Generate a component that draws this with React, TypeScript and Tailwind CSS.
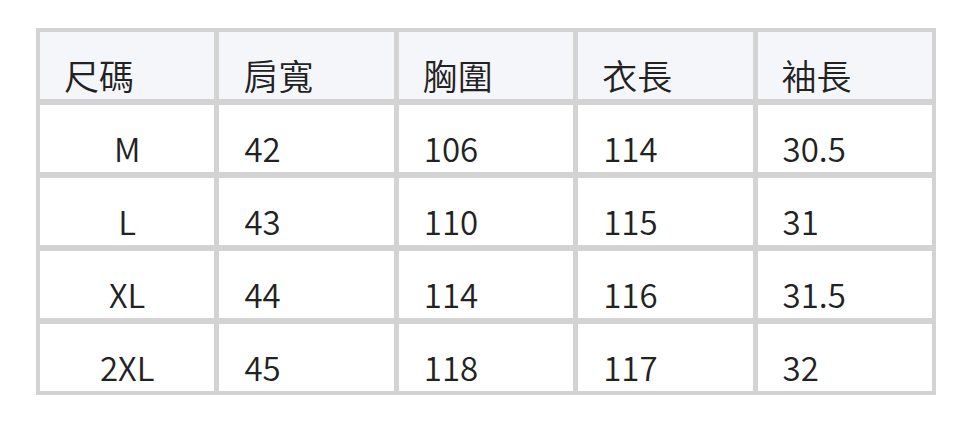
const headers = ['尺碼', '肩寬', '胸圍', '衣長', '袖長']

const rows = [
  ['M', '42', '106', '114', '30.5'],
  ['L', '43', '110', '115', '31'],
  ['XL', '44', '114', '116', '31.5'],
  ['2XL', '45', '118', '117', '32'],
]

export default function App() {
  return (
    <div className="min-h-screen bg-white pl-[36px] pt-[28px] font-['Noto_Sans_CJK_TC','Noto_Sans',sans-serif] font-[350] text-[#222]">
      <div className="grid w-[900px] grid-cols-5 gap-x-[5px] gap-y-[6px] bg-[#d3d3d3] p-[4px]">
        {headers.map((h) => (
          <div
            key={h}
            className="flex h-[67px] items-end bg-[#f5f6fa] pb-[4px] pl-[24px] text-[35px] leading-none"
          >
            <span className="leading-[40px]">{h}</span>
          </div>
        ))}
        {rows.map((row) =>
          row.map((cell, i) => (
            <div
              key={row[0] + i}
              className={
                i === 0
                  ? 'flex h-[67px] items-end justify-center bg-white pb-[4px] text-[33px]'
                  : 'flex h-[67px] items-end bg-white pb-[4px] pl-[25px] text-[33px]'
              }
            >
              <span className="leading-[40px]">{cell}</span>
            </div>
          ))
        )}
      </div>
    </div>
  )
}
